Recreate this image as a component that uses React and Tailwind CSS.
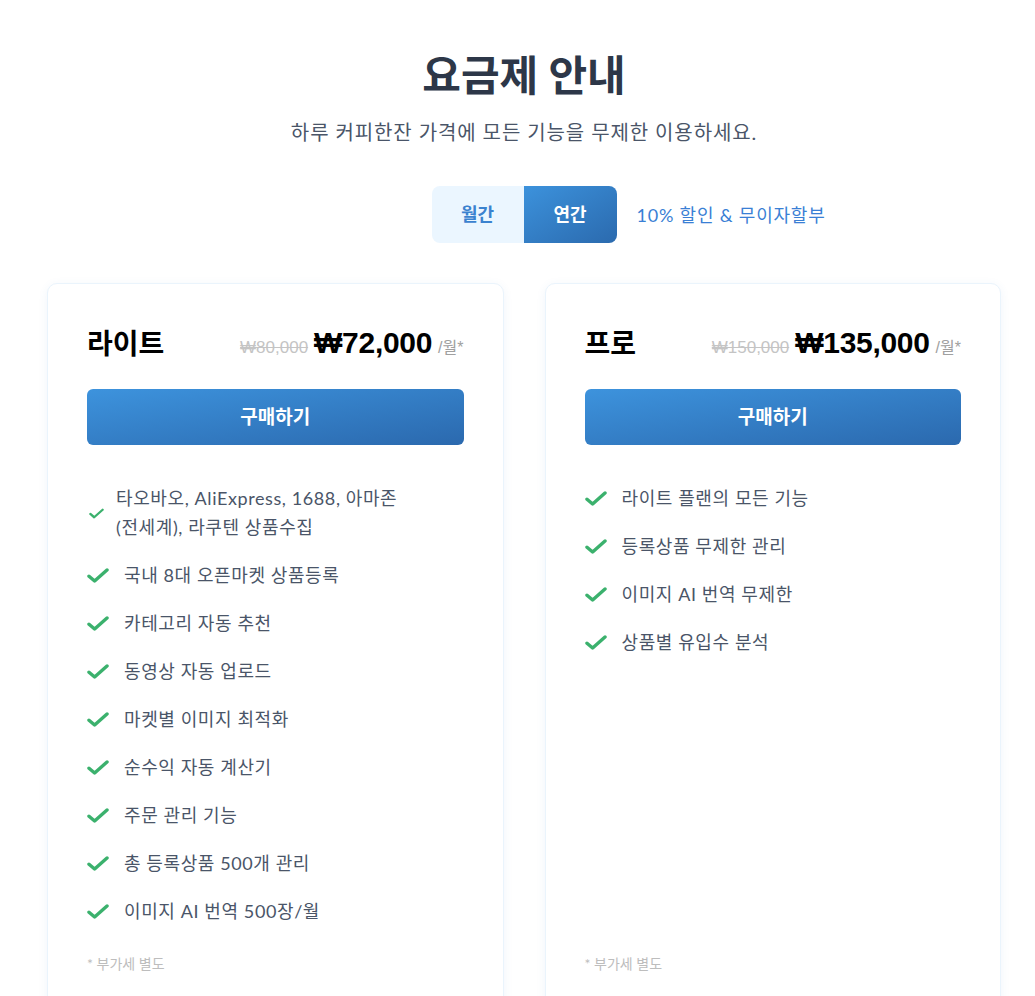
const font = { fontFamily: '"Lato", "Noto Sans CJK KR", sans-serif' };

function CheckIcon({ small }) {
  return (
    <svg
      viewBox="0 0 22 15"
      className={small ? "w-[15px] h-[11px] text-[#3bb16d]" : "w-[22px] h-[15px] text-[#3bb16d]"}
      fill="none"
    >
      <path d="M2 8.2 L7.6 13 L20 2" stroke="currentColor" strokeWidth="3.4" strokeLinecap="round" strokeLinejoin="round" />
    </svg>
  );
}

const plans = [
  {
    name: "라이트",
    old: "₩80,000",
    price: "₩72,000",
    features: [
      ["타오바오, AliExpress, 1688, 아마존", "(전세계), 라쿠텐 상품수집"],
      "국내 8대 오픈마켓 상품등록",
      "카테고리 자동 추천",
      "동영상 자동 업로드",
      "마켓별 이미지 최적화",
      "순수익 자동 계산기",
      "주문 관리 기능",
      "총 등록상품 500개 관리",
      "이미지 AI 번역 500장/월",
    ],
  },
  {
    name: "프로",
    old: "₩150,000",
    price: "₩135,000",
    features: ["라이트 플랜의 모든 기능", "등록상품 무제한 관리", "이미지 AI 번역 무제한", "상품별 유입수 분석"],
  },
];

export default function App() {
  return (
    <div className="min-h-screen bg-white pl-[47px] pr-[34px] pt-[47px]" style={font}>
      {/* Header */}
      <div className="text-center">
        <h1 className="text-[42px] font-bold text-[#2d3748] leading-[56px]">요금제 안내</h1>
        <p className="mt-[16px] text-[20px] tracking-[0.9px] text-[#4a5568] leading-[26px]">하루 커피한잔 가격에 모든 기능을 무제한 이용하세요.</p>
      </div>

      {/* Toggle */}
      <div className="mt-[41px] flex justify-center">
        <div className="relative flex h-[57px] rounded-lg">
          <button className="w-[92px] rounded-l-lg bg-[#ebf6ff] text-[18px] font-bold text-[#3b82cf]">월간</button>
          <button className="w-[93px] rounded-r-lg bg-gradient-to-br from-[#3c92dc] to-[#2b6aae] text-[18px] font-bold text-white">연간</button>
          <span className="absolute left-[205px] top-1/2 -translate-y-1/2 whitespace-nowrap text-[18px] tracking-[0.8px] text-[#3a7fd5]">
            10% 할인 &amp; 무이자할부
          </span>
        </div>
      </div>

      {/* Cards */}
      <div className="mt-[40px] grid grid-cols-2 gap-[41px]">
        {plans.map((plan) => (
          <div
            key={plan.name}
            className="flex flex-col rounded-[10px] border border-[#eaf4fc] bg-white px-[39px] pt-[40px] pb-[40px] shadow-[0_2px_10px_rgba(59,130,200,0.08)]"
          >
            <div className="flex h-[36px] items-center justify-between">
              <h2 className="text-[28px] font-bold text-black" style={{ fontFamily: '"Noto Sans CJK KR", sans-serif' }}>{plan.name}</h2>
              <div className="flex items-baseline gap-[6px]" style={{ fontFamily: '"Liberation Sans", "Noto Sans CJK KR", sans-serif' }}>
                <span className="text-[17px] text-[#c4c4c4] line-through">{plan.old}</span>
                <span className="text-[30px] font-bold text-black tracking-[-0.3px]">{plan.price}</span>
                <span className="text-[16px] text-[#a0a0a0]">/월*</span>
              </div>
            </div>

            <button className="mt-[29px] h-[56px] w-full rounded-md bg-gradient-to-br from-[#3d93dd] to-[#2b69ae] text-[19px] font-bold text-white">
              구매하기
            </button>

            <ul className="mt-[39px] flex flex-col gap-[19px]">
              {plan.features.map((f, i) => (
                <li key={i} className="flex items-center gap-[15px] text-[18px] tracking-[0.6px] leading-[29px] text-[#4a5568]">
                  {Array.isArray(f) ? (
                    <>
                      <span className="ml-[2px] flex shrink-0">
                        <CheckIcon small />
                      </span>
                      <span className="-ml-[3px]">
                        {f[0]}
                        <br />
                        {f[1]}
                      </span>
                    </>
                  ) : (
                    <>
                      <CheckIcon />
                      <span>{f}</span>
                    </>
                  )}
                </li>
              ))}
            </ul>

            <p className="mt-auto pt-[28px] text-[14px] leading-[20px] text-[#bdbdbd]">* 부가세 별도</p>
          </div>
        ))}
      </div>
    </div>
  );
}
